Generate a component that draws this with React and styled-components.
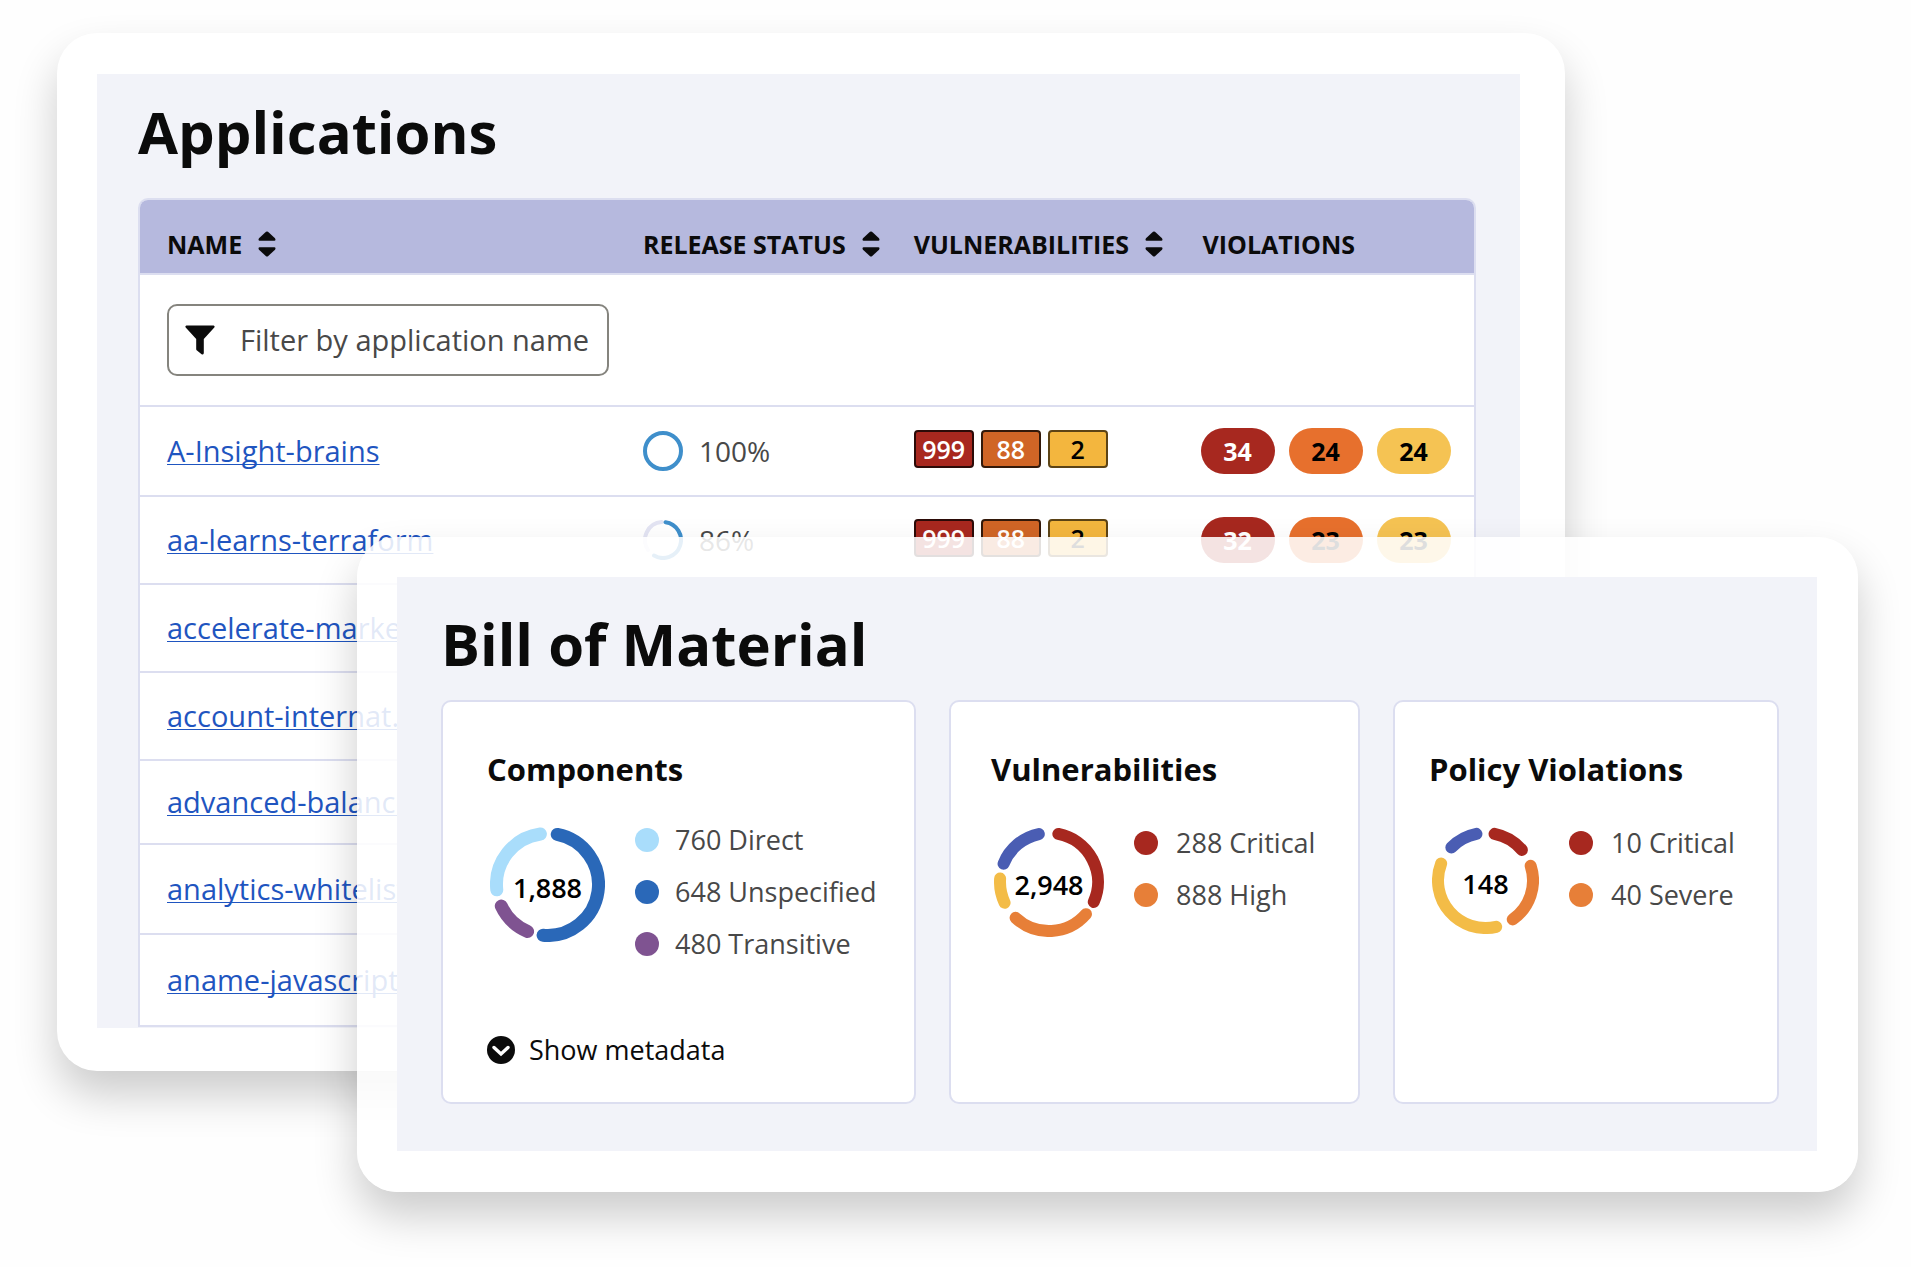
import { useState } from "react";
import styled, { createGlobalStyle } from "styled-components";

const colors = {
  page: "#fefefe",
  panel: "#f2f3f9",
  header: "#b6b9de",
  line: "#dcdef0",
  ink: "#0b0b0b",
  text: "#484848",
  link: "#1f55c0",
  critical: "#a7281f",
  high: "#e77f38",
  medium: "#f3bc47",
  low: "#4a5db3",
};

const applications = [
  {
    name: "A-Insight-brains",
    size: "tall",
    release: 100,
    arc: [0, 360],
    vulnerabilities: [999, 88, 2],
    violations: [34, 24, 24],
  },
  {
    name: "aa-learns-terraform",
    release: 86,
    arc: [8, 210],
    rest: [236, 356],
    vulnerabilities: [999, 88, 2],
    violations: [32, 23, 23],
  },
  { name: "accelerate-market" },
  { name: "account-internat..." },
  { name: "advanced-balance", size: "short" },
  { name: "analytics-whitelist", size: "tall" },
  { name: "aname-javascript", size: "tall" },
];

const componentArcs = [
  { from: 11, to: 185, color: "#2a68b8" },
  { from: 203, to: 245, color: "#7f5391" },
  { from: 264, to: 352, color: "#a9ddfb" },
];
const vulnerabilityArcs = [
  { from: 11, to: 114, color: colors.critical },
  { from: 131, to: 223, color: colors.high },
  { from: 245, to: 274, color: colors.medium },
  { from: 292, to: 348, color: colors.low },
];
const violationArcs = [
  { from: 11, to: 50, color: colors.critical },
  { from: 72, to: 145, color: colors.high },
  { from: 167, to: 291, color: colors.medium },
  { from: 314, to: 349, color: colors.low },
];

const rowHeights = { tall: 90, short: 84 };
const badgeColors = ["#a8281f", "#d06526", "#f3b63e"];
const badgeBorders = ["#2c0b08", "#33190a", "#5c4315"];
const pillColors = ["#a7281f", "#e7702d", "#f5c353"];

export default function App() {
  const [filter, setFilter] = useState("");

  return (
    <>
      <GlobalStyle />
      <Page>
        <ApplicationsCard>
          <ApplicationsPanel>
            <Title $gap={26}>Applications</Title>
            <Table>
              <thead>
                <tr>
                  <HeadCell $width="37.7%">
                    <SortButton label="Name" />
                  </HeadCell>
                  <HeadCell $width="20.3%">
                    <SortButton label="Release status" />
                  </HeadCell>
                  <HeadCell $width="21.5%">
                    <SortButton label="Vulnerabilities" />
                  </HeadCell>
                  <HeadCell $width="20.5%">
                    <HeadText>Violations</HeadText>
                  </HeadCell>
                </tr>
              </thead>
              <tbody>
                <Row $height={132}>
                  <td colSpan={4}>
                    <FilterBox>
                      <FunnelIcon />
                      <FilterInput
                        type="text"
                        aria-label="Filter by application name"
                        placeholder="Filter by application name"
                        value={filter}
                        onChange={(e) => setFilter(e.target.value)}
                      />
                    </FilterBox>
                  </td>
                </Row>
                {applications
                  .filter((app) => app.name.includes(filter))
                  .map((app) => (
                    <ApplicationRow key={app.name} app={app} />
                  ))}
              </tbody>
            </Table>
          </ApplicationsPanel>
        </ApplicationsCard>

        <BillCard>
          <BillPanel>
            <Title $gap={16}>Bill of Material</Title>
            <Summaries>
              <Summary $inset={46}>
                <SummaryTitle>Components</SummaryTitle>
                <SummaryBody>
                  <Donut size={115} stroke={13} total="1,888" arcs={componentArcs} />
                  <Legend $gap={16}>
                    <li>
                      <Dot $color="#a9ddfb" />
                      760 Direct
                    </li>
                    <li>
                      <Dot $color="#2a68b8" />
                      648 Unspecified
                    </li>
                    <li>
                      <Dot $color="#7f5391" />
                      480 Transitive
                    </li>
                  </Legend>
                </SummaryBody>
                <MetadataButton type="button">
                  <ChevronIcon />
                  Show metadata
                </MetadataButton>
              </Summary>
              <Summary $inset={42}>
                <SummaryTitle>Vulnerabilities</SummaryTitle>
                <SummaryBody>
                  <Donut size={110} stroke={12} total="2,948" arcs={vulnerabilityArcs} />
                  <Legend $gap={18} $low>
                    <li>
                      <Dot $color={colors.critical} />
                      288 Critical
                    </li>
                    <li>
                      <Dot $color={colors.high} />
                      888 High
                    </li>
                  </Legend>
                </SummaryBody>
              </Summary>
              <Summary $inset={36}>
                <SummaryTitle>Policy Violations</SummaryTitle>
                <SummaryBody>
                  <Donut size={107} stroke={12} total="148" arcs={violationArcs} />
                  <Legend $gap={18} $low>
                    <li>
                      <Dot $color={colors.critical} />
                      10 Critical
                    </li>
                    <li>
                      <Dot $color={colors.high} />
                      40 Severe
                    </li>
                  </Legend>
                </SummaryBody>
              </Summary>
            </Summaries>
          </BillPanel>
        </BillCard>
      </Page>
    </>
  );
}

function ApplicationRow({ app }) {
  return (
    <Row $height={rowHeights[app.size] || 88}>
      <td>
        <AppLink href="#">{app.name}</AppLink>
      </td>
      <td>
        {app.release && (
          <Release>
            <svg width="40" height="40" viewBox="0 0 40 40" fill="none" strokeWidth="4">
              {app.rest && (
                <path d={arcPath(20, 18, app.rest[0], app.rest[1])} stroke="#e3e4f3" strokeLinecap="round" />
              )}
              {app.release === 100 ? (
                <circle cx="20" cy="20" r="18" stroke="#3f8fcb" />
              ) : (
                <path d={arcPath(20, 18, app.arc[0], app.arc[1])} stroke="#3f8fcb" strokeLinecap="round" />
              )}
            </svg>
            {app.release}%
          </Release>
        )}
      </td>
      <td>
        {app.vulnerabilities && (
          <Badges>
            {app.vulnerabilities.map((count, i) => (
              <Badge key={i} $level={i}>
                {count}
              </Badge>
            ))}
          </Badges>
        )}
      </td>
      <td>
        {app.violations && (
          <Pills>
            {app.violations.map((count, i) => (
              <Pill key={i} $level={i}>
                {count}
              </Pill>
            ))}
          </Pills>
        )}
      </td>
    </Row>
  );
}

function SortButton({ label }) {
  return (
    <HeadButton type="button">
      {label}
      <svg width="18" height="26" viewBox="0 0 18 26" fill={colors.ink}>
        <path d="M8 0.8Q9 0 10 0.8L17 7.2Q18.2 9.6 16.4 9.8H1.6Q-0.2 9.6 1 7.2Z" />
        <path d="M8 25.2Q9 26 10 25.2L17 18.8Q18.2 16.4 16.4 16.2H1.6Q-0.2 16.4 1 18.8Z" />
      </svg>
    </HeadButton>
  );
}

function FunnelIcon() {
  return (
    <svg width="30" height="30" viewBox="0 0 30 30" fill={colors.ink}>
      <path d="M1.4 0.5H28.6Q30.2 1 29.3 2.6L18.8 14V28.2Q18.2 30 16.6 29.2L12 25.6Q11.2 25 11.2 24V14L0.7 2.6Q-0.2 1 1.4 0.5Z" />
    </svg>
  );
}

function ChevronIcon() {
  return (
    <svg width="28" height="28" viewBox="0 0 28 28">
      <circle cx="14" cy="14" r="14" fill={colors.ink} />
      <path
        d="M7 11.5L14 18L21 11.5"
        fill="none"
        stroke="#fff"
        strokeWidth="3.4"
        strokeLinecap="round"
        strokeLinejoin="miter"
      />
    </svg>
  );
}

function Donut({ size, stroke, total, arcs }) {
  return (
    <DonutBox>
      <svg width={size} height={size} fill="none" strokeWidth={stroke} strokeLinecap="round">
        {arcs.map((arc) => (
          <path
            key={arc.from}
            d={arcPath(size / 2, (size - stroke) / 2, arc.from, arc.to)}
            stroke={arc.color}
          />
        ))}
      </svg>
      <Total>{total}</Total>
    </DonutBox>
  );
}

// angles are clockwise degrees from twelve o'clock
function arcPath(center, radius, from, to) {
  const point = (angle) => {
    const rad = (angle * Math.PI) / 180;
    return `${center + radius * Math.sin(rad)} ${center - radius * Math.cos(rad)}`;
  };
  const large = to - from > 180 ? 1 : 0;
  return `M${point(from)}A${radius} ${radius} 0 ${large} 1 ${point(to)}`;
}

const GlobalStyle = createGlobalStyle`
  * {
    box-sizing: border-box;
  }
  body {
    margin: 0;
    background-color: ${colors.page};
    color: ${colors.ink};
    font-family: "Open Sans", "Noto Sans", sans-serif;
  }
  button, input {
    font-family: inherit;
    color: inherit;
  }
  svg {
    flex: none;
  }
`;
const Page = styled.main`
  padding: 33px 53px 72px 57px;
`;
const Card = styled.section`
  border-radius: 40px;
  box-shadow: 0 24px 44px rgba(0, 0, 0, 0.2);
`;
const ApplicationsCard = styled(Card)`
  margin-right: 293px;
  padding: 41px 45px 43px 40px;
  background-color: white;
`;
const BillCard = styled(Card)`
  position: relative;
  margin-top: -534px;
  margin-left: 300px;
  padding: 40px 41px 41px 40px;
  background-color: rgba(255, 255, 255, 0.87);
`;
const ApplicationsPanel = styled.div`
  padding: 18px 44px 1px 41px;
  background-color: ${colors.panel};
`;
const BillPanel = styled.div`
  padding: 27px 38px 47px 44px;
  background-color: ${colors.panel};
`;
const Title = styled.h1`
  margin: 0 0 ${(props) => props.$gap}px;
  font-size: 58px;
  font-weight: 700;
  line-height: 80px;
`;
const Table = styled.table`
  width: 100%;
  table-layout: fixed;
  border: 2px solid ${colors.line};
  border-radius: 10px 10px 0 0;
  border-spacing: 0;
  overflow: hidden;
  background-color: white;

  th,
  td {
    padding: 0;
    border-bottom: 2px solid ${colors.line};
    white-space: nowrap;
  }
  tr > :first-child {
    padding-left: 27px;
  }
  tr:last-child > td {
    border-bottom: none;
  }
`;
const HeadCell = styled.th`
  width: ${(props) => props.$width};
  height: 75px;
  background-color: ${colors.header};
  text-align: left;
  text-transform: uppercase;
  font-size: 25px;
`;
const HeadButton = styled.button`
  display: flex;
  align-items: center;
  gap: 16px;
  margin-top: 14px;
  padding: 0;
  border: none;
  background: none;
  font-size: 25px;
  font-weight: 700;
  line-height: 34px;
  text-transform: uppercase;
`;
const HeadText = styled.span`
  display: block;
  margin-top: 14px;
  padding-left: 2px;
  line-height: 34px;
`;
const Row = styled.tr`
  height: ${(props) => props.$height}px;
`;
const FilterBox = styled.label`
  display: flex;
  align-items: center;
  gap: 25px;
  width: 442px;
  height: 72px;
  padding: 0 16px;
  border: 2px solid #85847e;
  border-radius: 10px;
`;
const FilterInput = styled.input`
  flex: 1;
  min-width: 0;
  padding: 0 0 2px;
  border: none;
  outline: none;
  background: none;
  font-size: 29px;

  &::placeholder {
    color: ${colors.text};
    opacity: 1;
  }
`;
const AppLink = styled.a`
  display: inline-block;
  padding-bottom: 1px;
  color: ${colors.link};
  font-size: 29px;
  line-height: 38px;
  text-decoration-thickness: 1px;
  text-underline-offset: 2px;
  text-decoration-skip-ink: none;
`;
const Release = styled.div`
  display: flex;
  align-items: center;
  gap: 16px;
  color: ${colors.text};
  font-size: 28px;
`;
const Badges = styled.div`
  display: flex;
  gap: 7px;
  margin-bottom: 4px;
`;
const Badge = styled.span`
  width: 60px;
  height: 38px;
  border: 2px solid ${(props) => badgeBorders[props.$level]};
  border-radius: 4px;
  background-color: ${(props) => badgeColors[props.$level]};
  color: ${(props) => (props.$level === 2 ? "black" : "white")};
  font-size: 25px;
  font-weight: 600;
  line-height: 34px;
  text-align: center;
`;
const Pills = styled.div`
  display: flex;
  gap: 14px;
`;
const Pill = styled.span`
  width: 74px;
  height: 46px;
  border-radius: 23px;
  background-color: ${(props) => pillColors[props.$level]};
  color: ${(props) => (props.$level === 0 ? "white" : "black")};
  font-size: 25px;
  font-weight: 700;
  line-height: 46px;
  text-align: center;
`;
const Summaries = styled.div`
  display: grid;
  grid-template-columns: 475fr 411fr 386fr;
  gap: 33px;
`;
const Summary = styled.article`
  display: flex;
  flex-direction: column;
  min-height: 404px;
  padding: 47px 14px 32px ${(props) => props.$inset - 2}px;
  border: 2px solid ${colors.line};
  border-radius: 10px;
  background-color: white;
`;
const SummaryTitle = styled.h2`
  margin: 0 0 33px;
  font-size: 31px;
  font-weight: 700;
  line-height: 40px;
`;
const SummaryBody = styled.div`
  display: flex;
  align-items: flex-start;
  gap: 30px;
  padding-left: 3px;
`;
const DonutBox = styled.div`
  display: grid;
  place-items: center;
  margin-top: 5px;

  > * {
    grid-area: 1 / 1;
  }
`;
const Total = styled.span`
  padding-top: 5px;
  color: black;
  font-size: 27px;
  font-weight: 600;
`;
const Legend = styled.ul`
  display: flex;
  flex-direction: column;
  gap: 16px;
  margin: 0;
  padding: ${(props) => (props.$low ? 3 : 0)}px 0 0;
  list-style: none;
  color: ${colors.text};
  font-size: 27px;
  line-height: 36px;
  white-space: nowrap;

  li {
    display: flex;
    align-items: center;
    gap: ${(props) => props.$gap}px;
  }
`;
const Dot = styled.span`
  width: 24px;
  height: 24px;
  border-radius: 50%;
  background-color: ${(props) => props.$color};
`;
const MetadataButton = styled.button`
  display: flex;
  align-items: center;
  gap: 14px;
  margin-top: auto;
  padding: 0;
  border: none;
  background: none;
  font-size: 27px;
  line-height: 40px;
`;
